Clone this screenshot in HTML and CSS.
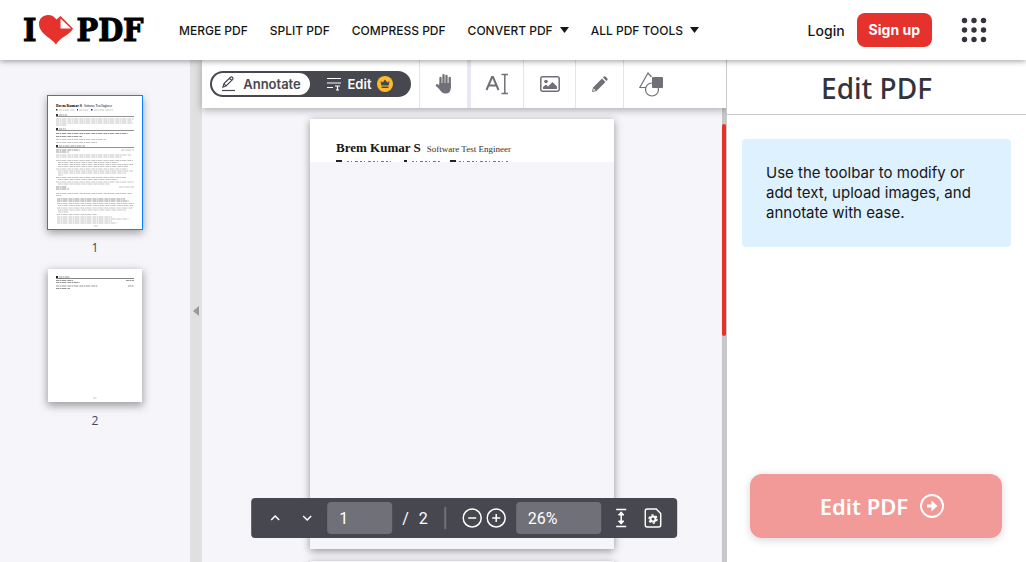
FILE: index.html
```html
<!DOCTYPE html>
<html lang="en">
<head>
<meta charset="utf-8">
<meta name="viewport" content="width=device-width, initial-scale=1">
<title>Edit PDF</title>
<link rel="stylesheet" href="styles.css">
</head>
<body>
<header class="header">
  <a class="logo" href="#" aria-label="I love PDF">
    <span>I</span>
    <svg width="34" height="30" viewBox="0 0 34 30" aria-hidden="true"><path d="M17 29.500C13.500 23.500 0 19 0 9C0 3.500 4 0 9 0C13 0 15.500 2 17.500 4.500L21.500 1L34 13.500C31 20 21 22 17 29.500Z" fill="#e5322d"/><path d="M21.500 3.500V13.500H32Z" fill="#fff"/></svg>
    <span>PDF</span>
  </a>
  <nav class="nav">
    <a href="#">MERGE PDF</a>
    <a href="#">SPLIT PDF</a>
    <a href="#">COMPRESS PDF</a>
    <a href="#">CONVERT PDF <svg width="9" height="6" viewBox="0 0 9 6"><path d="M0 0H9L4.500 6Z" fill="#161616"/></svg></a>
    <a href="#">ALL PDF TOOLS <svg width="9" height="6" viewBox="0 0 9 6"><path d="M0 0H9L4.500 6Z" fill="#161616"/></svg></a>
  </nav>
  <div class="account">
    <a class="login" href="#">Login</a>
    <a class="signup" href="#">Sign up</a>
    <button class="apps" aria-label="More"><svg width="26" height="26" viewBox="0 0 26 26" fill="#33333b"><circle cx="3.500" cy="3.500" r="2.700"/><circle cx="13" cy="3.500" r="2.700"/><circle cx="22.500" cy="3.500" r="2.700"/><circle cx="3.500" cy="13" r="2.700"/><circle cx="13" cy="13" r="2.700"/><circle cx="22.500" cy="13" r="2.700"/><circle cx="3.500" cy="22.500" r="2.700"/><circle cx="13" cy="22.500" r="2.700"/><circle cx="22.500" cy="22.500" r="2.700"/></svg></button>
  </div>
</header>
<main class="app">
  <aside class="thumbs" aria-label="Pages">
    <button class="thumb selected" aria-label="Page 1">
      <svg viewBox="0 0 94 133" aria-hidden="true">
        <text x="8" y="10.500" class="thumb-name">Brem Kumar S</text><text x="36" y="10.500" class="thumb-role">Software Test Engineer</text>
        <g fill="#333"><rect x="8" y="13" width="1.500" height="1.500"/><rect x="29" y="13" width="1" height="1.500"/><rect x="43" y="13" width="1.500" height="1.500"/><rect x="8" y="18" width="2" height="2"/><rect x="8" y="32" width="2" height="2"/><rect x="8" y="49" width="2" height="2"/></g>
        <g stroke="#777" stroke-width=".8"><path d="M8 20.500h78M8 34.500h78M8 51.500h78"/></g>
        <g class="ink bold"><path d="M11 19h8M11 33h7M11 50h26M8 37.500h72M8 40.500h26M8 54h24M8 56h13M8 91h11M8 93h13M9 103h68M9 105h72"/></g>
        <g class="ink"><path d="M11 14h16M31 14h9M46 14h19M8 23h78M8 25h76M8 27h77M8 29h11M8 43.500h50M8 46.500h41M73 54h13M71 91h15M8 59h75M8 61h66M8 64.500h77M10 66.500h60M10 68.500h75M10 70.500h70M8 73h72M10 75h75M10 77h68M10 79h5M8 81.500h70M10 83.500h60M8 86h78M10 88h52M8 97.500h76M8 99.500h6M9 107.500h77M10 109.500h75M9 112h76M10 114h68M10 116h10M9 118.500h40M9 121h55M9 123h72M9 125h55M9 127h60M46 130h4"/></g>
      </svg>
    </button>
    <span class="thumb-label">1</span>
    <button class="thumb" aria-label="Page 2">
      <svg viewBox="0 0 94 133" aria-hidden="true">
        <rect x="8" y="7" width="2" height="2" fill="#222"/><path d="M8 9.500h78" stroke="#666" stroke-width=".8"/>
        <g class="ink bold"><path d="M11 8h11M8 11.500h17M8 13.500h24M8 17h42M8 19.500h14M78 11.500h8M80 17h6"/></g><path class="ink" d="M45 129h4"/>
      </svg>
    </button>
    <span class="thumb-label">2</span>
  </aside>
  <button class="splitter" aria-label="Collapse pages"></button>
  <section class="editor">
    <div class="toolbar">
      <div class="mode">
        <button class="mode-on"><svg width="16" height="16" viewBox="0 0 16 16" fill="none" stroke="#47474f" stroke-width="1.200"><path d="M2 11L3 7.500L9.500 1.200Q10.500.500 11.500 1.500Q12.500 2.500 11.500 3.600L5 10ZM8.500 2.300L10.700 4.500M3 7.500L5 10"/><path d="M1 14.500H14"/></svg>Annotate</button>
        <button class="mode-off"><svg width="16" height="14" viewBox="0 0 16 14" fill="none" stroke="#fff" stroke-width="1.200"><path d="M1 1.500H15M1 6H15M1 10.500H7M9 9H14M11.500 9V13M10 13H13"/></svg>Edit<svg width="16" height="16" viewBox="0 0 16 16"><circle cx="8" cy="8" r="8" fill="#fbbc2b"/><path d="M3.500 5L5.700 6.500L8 3.500L10.300 6.500L12.500 5L11.700 9.500H4.300ZM4.500 10.500H11.500V12H4.500Z" fill="#47474f"/></svg></button>
      </div>
      <button class="tool tool-hand" aria-label="Pan"><svg width="18" height="22" viewBox="0 0 18 22" fill="none" stroke="#707078" stroke-linecap="round"><path d="M5.500 5V13M8.500 2.200V12M11.500 3V12M14.700 5V14" stroke-width="2.300"/><path d="M2 12.300L5 15" stroke-width="2.500"/><path d="M4.400 10H15.800V15Q15.800 20.500 10.500 20.500Q6.500 20.500 4 15.500Z" fill="#707078" stroke="none"/></svg></button>
      <button class="tool" aria-label="Add text"><svg width="24" height="22" viewBox="0 0 24 22" fill="none" stroke="#707078"><path d="M1.500 17L7 4H8L13.500 17M3.700 12.500H11.300" stroke-width="2"/><path d="M16.500 1.500H23M19.800 1.500V20.500M16.500 20.500H23" stroke-width="1.500"/></svg></button>
      <button class="tool" aria-label="Add image"><svg width="20" height="16" viewBox="0 0 20 16"><rect x=".8" y=".8" width="18.400" height="14.400" rx="2" fill="none" stroke="#707078" stroke-width="1.500"/><circle cx="6" cy="5.500" r="1.800" fill="#707078"/><path d="M3 13V11L6 8.500L8 10.500L12.500 6L17 10.500V13Z" fill="#707078"/></svg></button>
      <button class="tool tool-pen" aria-label="Draw"><svg width="16" height="16" viewBox="0 0 16 16" fill="#707078"><path d="M0 16L1 11.500L10 2.500L13.500 6L4.500 15ZM11 1.500L12 .5Q13 0 14 1L15 2Q16 3 15.500 4L14.500 5Z"/><path d="M1.700 12.500L3.700 14.300L1.200 14.800Z" fill="#fff"/></svg></button>
      <button class="tool tool-shapes" aria-label="Add shape"><svg width="24" height="25" viewBox="0 0 24 25" fill="none" stroke="#707078" stroke-width="1.200"><path d="M12.500 5L9 1L.8 15.500H7"/><circle cx="13" cy="17.500" r="6.500"/><rect x="13" y="5" width="11" height="11" rx="1" fill="#707078" stroke="none"/></svg></button>
    </div>
    <div class="canvas">
      <div class="pages">
        <article class="page">
          <div class="page-rendered">
            <div class="page-title"><b>Brem Kumar S</b><span>Software Test Engineer</span></div>
            <svg width="180" height="2" viewBox="0 0 180 2" aria-hidden="true"><path d="M0 1H6M68 1H71M114 1H120" stroke="#222" stroke-width="2"/><path d="M11 1.500H56M76 1.500H106M123 1.500H172" stroke="#777" stroke-dasharray="2 2 1 3 3 2"/></svg>
          </div>
        </article>
        <article class="page"></article>
      </div>
      <div class="scrollbar"><div class="scroll-thumb"></div></div>
      <div class="controls">
        <button aria-label="Previous page"><svg width="10" height="6" viewBox="0 0 10 6"><path d="M1 5L5 1L9 5"/></svg></button>
        <button aria-label="Next page"><svg width="10" height="6" viewBox="0 0 10 6"><path d="M1 1L5 5L9 1"/></svg></button>
        <input class="page-input" aria-label="Page" value="1">
        <span class="total"><span>/</span><span>2</span></span>
        <span class="rule"></span>
        <button class="zoom" aria-label="Zoom out"><svg width="20" height="20" viewBox="0 0 20 20"><circle cx="10" cy="10" r="9"/><path d="M6 10H14"/></svg></button>
        <button class="zoom" aria-label="Zoom in"><svg width="20" height="20" viewBox="0 0 20 20"><circle cx="10" cy="10" r="9"/><path d="M6 10H14M10 6V14"/></svg></button>
        <input class="zoom-input" aria-label="Zoom" value="26%">
        <button class="fit" aria-label="Fit height"><svg width="12" height="20" viewBox="0 0 12 20"><path d="M1 1.500H11M1 18.500H11M6 5V15"/><path d="M3.300 7L6 3.800L8.700 7ZM3.300 13L6 16.200L8.700 13Z" fill="#fff" stroke-width="1"/></svg></button>
        <button class="settings" aria-label="Page settings"><svg width="18" height="20" viewBox="0 0 18 20"><path d="M3 1H12L16.500 5.500V17Q16.500 19 14.500 19H3Q1 19 1 17V3Q1 1 3 1Z"/><circle cx="8.800" cy="11" r="2.500" stroke-width="2"/><circle cx="8.800" cy="11" r="4" stroke-width="1.500" stroke-dasharray="2.200 1.990"/></svg></button>
      </div>
    </div>
  </section>
  <aside class="panel">
    <h1>Edit PDF</h1>
    <p class="info">Use the toolbar to modify or add text, upload images, and annotate with ease.</p>
    <button class="process">Edit PDF<svg width="24" height="24" viewBox="0 0 24 24"><circle cx="12" cy="12" r="11" fill="none" stroke="#fff" stroke-width="2"/><path d="M7 12H14" stroke="#fff" stroke-width="3"/><path d="M11.500 6.500L17.500 12L11.500 17.500Z" fill="#fff"/></svg></button>
  </aside>
</main>
</body>
</html>
```

FILE: styles.css
```css
* { box-sizing: border-box; }
body { margin: 0; height: 100vh; display: flex; flex-direction: column; overflow: hidden; background: #fff; color: #161616; font-family: Inter, "Liberation Sans", sans-serif; }
button { border: 0; padding: 0; margin: 0; background: none; font: inherit; color: inherit; display: flex; align-items: center; justify-content: center; cursor: pointer; }
a { color: inherit; text-decoration: none; }
svg { display: block; flex: none; }

.header { position: relative; z-index: 3; flex: none; height: 60px; display: flex; align-items: center; padding: 0 39px 0 23px; background: #fff; box-shadow: 0 1px 6px rgba(0, 0, 0, .4); }
.logo { display: flex; align-items: center; gap: 3px; width: 156px; font: bold 32px "DejaVu Serif Condensed", "DejaVu Serif", serif; color: #000; -webkit-text-stroke: 1px #000; }
.nav { display: flex; gap: 22px; font-size: 12px; font-weight: 500; }
.nav a { display: flex; align-items: center; gap: 7px; white-space: nowrap; }
.account { margin-left: auto; display: flex; align-items: center; }
.login { font-size: 14px; font-weight: 500; }
.signup { margin: 0 29px 0 12px; padding: 0 12px; height: 34px; line-height: 34px; border-radius: 8px; background: #e5322d; color: #fff; font-size: 14px; font-weight: 700; }

.app { flex: 1; min-height: 0; display: flex; }
.thumbs { width: 190px; flex: none; display: flex; flex-direction: column; align-items: center; padding-top: 35px; background: #f5f5fa; overflow: hidden; }
.thumb { width: 96px; height: 135px; flex: none; border: 1px solid transparent; background: #fff; background-clip: padding-box; box-shadow: 0 3px 8px rgba(0, 0, 0, .35); }
.thumb svg { width: 100%; height: 100%; }
.selected { border-color: #0a84ff; }
.thumb-label { margin: 9px 0 11px; font: 12px/18px "Open Sans", sans-serif; color: #47474f; }
.thumb-name { font: bold 4px "Liberation Serif", serif; }
.thumb-role { font: 3px "Liberation Serif", serif; }
.ink { stroke: #c4c4c4; stroke-width: 1; stroke-dasharray: 3 .5 2 .5 4 .6 1 .4; fill: none; }
.bold { stroke: #999; }
.splitter { width: 12px; flex: none; background: #e0e0e0; }
.splitter::before { content: ""; border: 5px solid transparent; border-right: 6px solid #999; border-left: 0; }

.editor { flex: 1; min-width: 0; display: flex; flex-direction: column; }
.toolbar { position: relative; z-index: 2; flex: none; height: 48px; display: flex; padding-left: 8px; background: #fff; box-shadow: 0 2px 8px rgba(0, 0, 0, .3); }
.mode { display: flex; width: 201px; height: 26px; align-self: center; margin-right: 8px; padding: 2px; border-radius: 13px; background: #47474f; font-size: 13px; font-weight: 600; }
.mode-on { width: 98px; gap: 6px; border-radius: 11px; background: #fff; color: #47474f; }
.mode-off { flex: 1; gap: 6px; color: #fff; }
.tool { width: 52px; border-left: 1px solid #e4e4f0; }
.tool-hand { border-right: 4px solid #e8e8f4; }
.tool-hand + .tool { border-left: 0; }
.tool-pen { width: 48px; }
.tool-shapes { width: 54px; }
.canvas { position: relative; flex: 1; min-height: 0; display: flex; background: #f5f5fa; }
.pages { flex: 1; min-width: 0; overflow: hidden; display: flex; flex-direction: column; align-items: center; gap: 12px; padding-top: 11px; }
.page { width: 304px; height: 430px; flex: none; background: #f5f5fa; box-shadow: 0 2px 8px rgba(0, 0, 0, .4); }
.page-rendered { display: flex; flex-direction: column; gap: 4px; padding: 20px 26px 0; height: 43px; background: #fff; overflow: hidden; }
.page-title { display: flex; flex: none; height: 17px; align-items: baseline; gap: 6px; font: 9px/17px "Liberation Serif", serif; color: #333; }
.page-title b { font-size: 13px; color: #161616; }
.scrollbar { width: 4px; padding-top: 16px; background: #c8c8cc; }
.scroll-thumb { height: 212px; border-radius: 2px; background: #e5322d; }
.controls { position: absolute; left: 50%; bottom: 24px; transform: translateX(-50%); display: flex; align-items: center; height: 40px; padding: 0 8px; border-radius: 4px; background: #47474f; color: #fff; font: 16px Roboto, sans-serif; }
.controls svg { fill: none; stroke: #fff; stroke-width: 1.5; }
.controls button { width: 32px; height: 32px; flex: none; }
.controls input { height: 32px; flex: none; border: 0; border-radius: 4px; padding: 0 12px; background: #707078; color: #fff; font: inherit; }
.controls .page-input { width: 65px; margin-left: 4px; }
.controls .zoom-input { width: 85px; margin: 0 4px 0 8px; }
.total { display: flex; gap: 10px; margin: 0 16px 0 10px; }
.rule { width: 2px; height: 22px; margin-right: 14px; background: #707078; }
.controls .zoom { width: 24px; }

.panel { position: relative; z-index: 2; width: 300px; flex: none; display: flex; flex-direction: column; border-left: 1px solid #c8c8cc; background: #fff; }
.panel h1 { margin: 0; height: 55px; text-align: center; font: 500 28px/56px "Noto Sans", sans-serif; color: #33333b; border-bottom: 1px solid #c8c8cc; }
.info { margin: 24px 15px; padding: 24px; border-radius: 4px; background: #def1ff; font-size: 15px; line-height: 20px; }
.process { margin: auto 24px 24px 23px; height: 64px; padding-left: 12px; gap: 12px; border-radius: 12px; background: #f29a97; color: #fff; font: 600 22px "Noto Sans", sans-serif; box-shadow: 0 2px 8px rgba(0, 0, 0, .16); }
```
